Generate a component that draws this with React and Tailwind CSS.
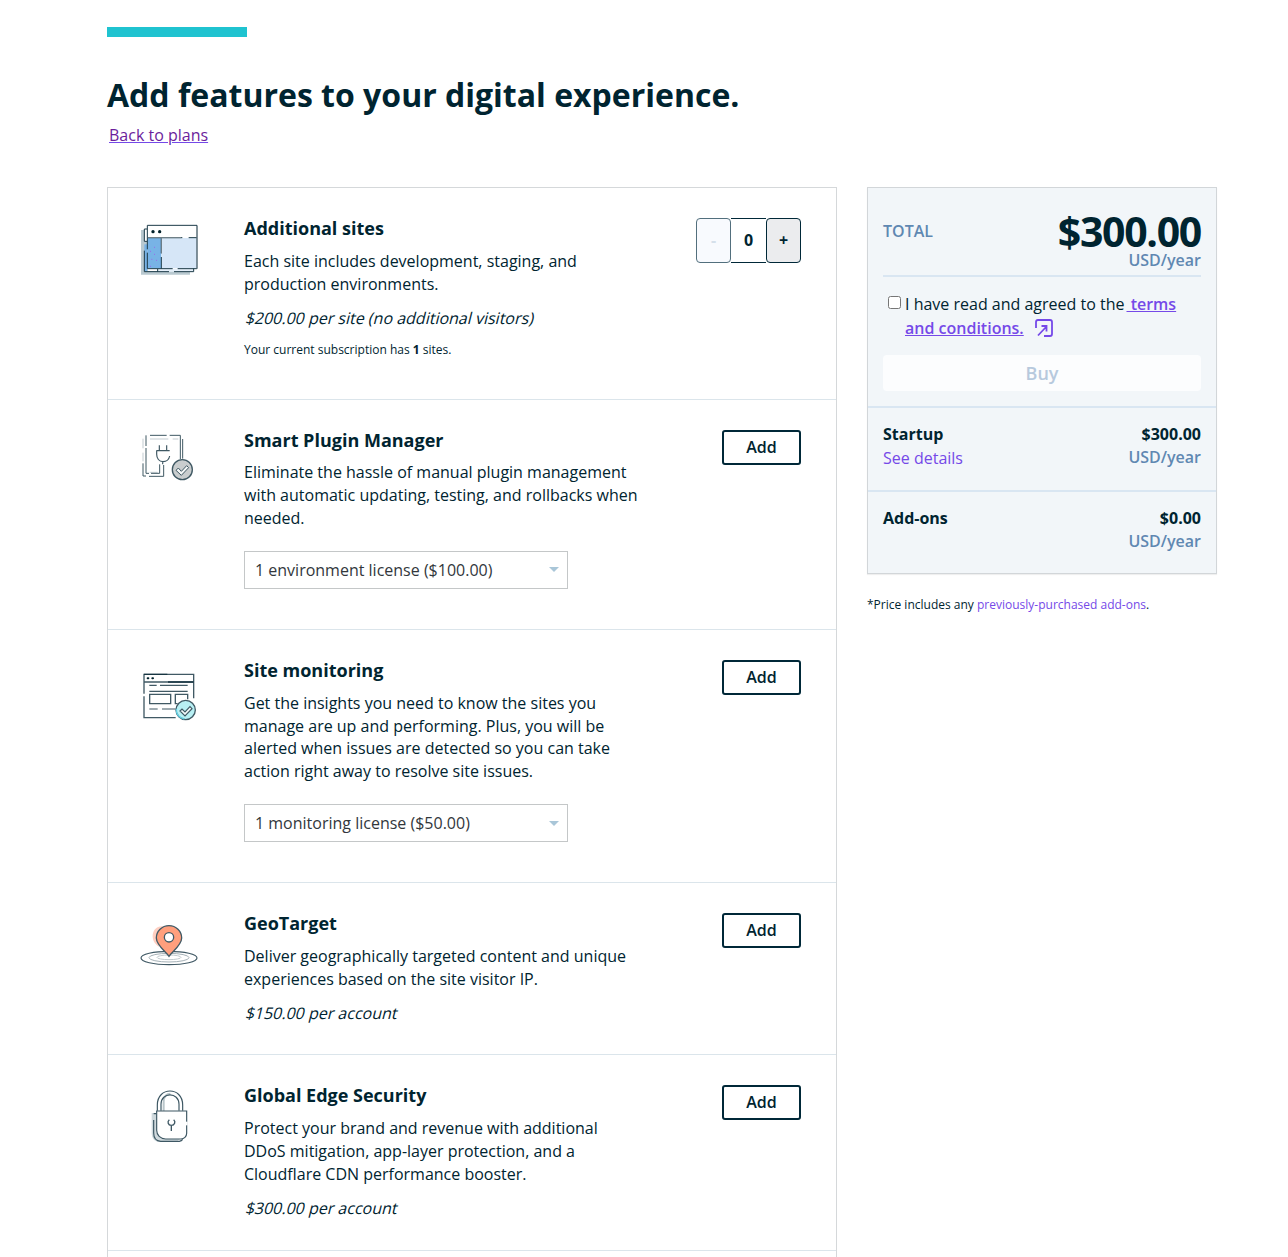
import { useState } from "react";

const SitesIcon = () => (
  <svg className="h-20 w-20" viewBox="0 0 240 240" fill="none" stroke="#1b3a47" strokeWidth="3">
    <path d="M33 60h20v123h127v11H33z" fill="#b9c9d0" stroke="none" />
    <path d="M43 57h9v37h-9z" fill="#fff" stroke="none" />
    <path d="M43 103h9v80h-9z" fill="#78b3e6" stroke="none" />
    <path d="M83 177h108v8H83z" fill="#e6f0fa" stroke="none" />
    <path d="M43 94V57h9M43 94h9M43 122v63h74M83 177v8M132 185h59v-10" />
    <path d="M52 83h42v92H52z" fill="#78b3e6" stroke="none" />
    <path d="M94 83h107v92H94z" fill="#d6e6f7" stroke="none" />
    <path d="M52 46h149v37H52z" fill="#fff" stroke="none" />
    <path d="M52 118V46h149v130H143M52 128v48h76M52 83h105M176 83h25M94 83v47M94 141v35" />
    <path d="M201 48v128M53 83h100M94 84v46" stroke="#78868f" />
    <circle cx="69" cy="65" r="5" fill="#00212b" stroke="none" />
    <circle cx="89" cy="65" r="5" fill="#00212b" stroke="none" />
    <path d="M72 112h3M60 124h3M72 133h3M64 148h3M78 151h3M60 169h3" stroke="#9b6bea" />
  </svg>
);

const PluginIcon = () => (
  <svg className="h-20 w-20" viewBox="0 6 240 240" fill="none" stroke="#3f5863" strokeWidth="3">
    <path d="M39 56v29M39 98v26M60 57h55M128 57h17M59 157h24" stroke="#c3ccd1" />
    <path d="M39 130v38h9M57 169h44v-34M60 46h50M119 46h32v71M48 46v32M48 84v76h9M63 160h26v-27" />
    <path d="M158 57v59" />
    <path d="M88 76v16M110 76v16M79 92h40M80 92v11c0 12 7 22 19 22 10 0 18-7 20-17M98 125v8" strokeWidth="3.5" />
    <circle cx="157" cy="149" r="30" fill="#c9cdce" strokeWidth="4" />
    <path d="M138 151l7-7 9 10 16-17 6 6-22 23z" fill="#f4f6f6" strokeWidth="3" />
  </svg>
);

const MonitoringIcon = () => (
  <svg className="h-20 w-20" viewBox="0 -24 240 240" fill="none" stroke="#405964" strokeWidth="4">
    <path d="M42 101V43h149v72M42 109v64h95M42 66h149" />
    <path d="M42 43h70M114 66h77" stroke="#173541" />
    <path d="M58 76h22M90 76h83M58 94h115M58 147h25M96 147h41" strokeWidth="3.5" />
    <path d="M59 103h63v28H59zM173 118v-15h-37v28h7" />
    <path d="M53 55h2M67 55h2" stroke="#00212b" strokeWidth="6" strokeLinecap="round" />
    <circle cx="167" cy="150" r="29" fill="#b8f0f4" />
    <path d="M139 146c-1 16 9 27 24 31" stroke="#62cde0" />
    <path d="M150 153l6-6 9 9 15-16 6 6-21 22z" fill="#f4fcfd" strokeWidth="3.5" />
  </svg>
);

const GeoIcon = () => (
  <svg className="h-20 w-20" viewBox="0 -16 240 240" fill="none" stroke="#405965" strokeWidth="4">
    <ellipse cx="117" cy="143" rx="84" ry="20" strokeWidth="3.5" />
    <ellipse cx="117" cy="142" rx="60" ry="13" stroke="#a4b0b6" strokeWidth="3" />
    <ellipse cx="117" cy="141" rx="36" ry="7" stroke="#c2cbcf" strokeWidth="3" />
    <path d="M101 48c-20-3-34 12-33 31 1 17 12 25 18 30z" fill="#ffcfc1" stroke="none" />
    <path d="M117 138c-11-15-38-34-38-55a38 37 0 0 1 76 0c0 21-27 40-38 55z" fill="#ff9f7d" />
    <circle cx="117" cy="81" r="14" fill="#fff" />
  </svg>
);

const SecurityIcon = () => (
  <svg className="h-20 w-20" viewBox="0 -9 240 240" fill="none" stroke="#3d5763" strokeWidth="3.5">
    <path d="M65 99h15v61l14 17h56l-10 9H89c-15 0-24-12-24-27z" fill="#cfd9dd" stroke="none" />
    <path d="M71 120v39c0 14 8 24 21 25h56c5-1 8-3 10-6M71 101h8" />
    <path d="M101 93V64c0-14 9-23 20-23" stroke="#bac6ca" strokeWidth="6" />
    <path d="M80 93h90v67c0 10-8 17-17 17h-46c-16 0-27-12-27-26z" fill="#fff" />
    <path d="M170 125v11" stroke="#fff" strokeWidth="6" />
    <path d="M82 92V75c0-56 76-56 76 0v17M93 92V73c0-38 54-38 54 0v19" />
    <path d="M118 119c-7 6-4 17 6 17s14-11 7-17M124 136v17" strokeWidth="4" />
  </svg>
);

const addOns = [
  {
    title: "Smart Plugin Manager",
    icon: PluginIcon,
    height: "h-[230px]",
    gap: "mt-[9px]",
    lines: ["Eliminate the hassle of manual plugin management", "with automatic updating, testing, and rollbacks when", "needed."],
    license: "1 environment license ($100.00)",
  },
  {
    title: "Site monitoring",
    icon: MonitoringIcon,
    height: "h-[253px]",
    gap: "mt-[9.72px]",
    lines: [
      "Get the insights you need to know the sites you",
      "manage are up and performing. Plus, you will be",
      "alerted when issues are detected so you can take",
      "action right away to resolve site issues.",
    ],
    license: "1 monitoring license ($50.00)",
  },
  {
    title: "GeoTarget",
    icon: GeoIcon,
    height: "h-[172px]",
    gap: "mt-[10px]",
    lines: ["Deliver geographically targeted content and unique", "experiences based on the site visitor IP."],
    price: "$150.00 per account",
  },
  {
    title: "Global Edge Security",
    icon: SecurityIcon,
    height: "h-[196px]",
    gap: "mt-[10px]",
    lines: ["Protect your brand and revenue with additional", "DDoS mitigation, app-layer protection, and a", "Cloudflare CDN performance booster."],
    price: "$300.00 per account",
  },
];

const FeatureRow = ({ title, icon: Icon, height, gap, lines, price, license, note, action }) => (
  <div className={`flex border-b border-[#dbe5eb] ${height}`}>
    <div className="w-[136px] shrink-0 pt-[22px] pl-[22px]">
      <Icon />
    </div>
    <div className="flex-1 pt-[29px]">
      <h2 className="text-[18px] leading-[23px] font-bold">{title}</h2>
      <p className={`text-base leading-[22.86px] whitespace-nowrap ${gap}`}>
        {lines.map((line) => (
          <span key={line} className="block">{line}</span>
        ))}
      </p>
      {price && <p className="mt-[11px] ml-[1.5px] w-fit -skew-x-[14deg] text-base leading-[23px]">{price}</p>}
      {note}
      {license && (
        <button className="mt-[21px] flex h-[38px] w-[324px] items-center justify-between border border-[#c4c7c8] pr-2 pl-[10px] text-base text-[#32373c]">
          {license}
          <svg className="h-[5px] w-[10px]" viewBox="0 0 10 5" fill="#a9c6d8">
            <path d="M0 0h10L5 5z" />
          </svg>
        </button>
      )}
    </div>
    <div className="pt-[30px] pr-[35px]">{action}</div>
  </div>
);

const AddButton = () => (
  <button className="h-[35px] w-[79px] rounded-[3px] border-2 border-[#002838] pb-0.5 text-base font-semibold">Add</button>
);

const SiteCounter = ({ count, onChange }) => (
  <div className="flex h-[45px] w-[105px] text-base font-bold">
    <button
      className="w-[35px] rounded-[4px] border border-[#002838] bg-[#f8fafe] pb-px text-[#d5e0eb] disabled:border-[#526f7d]"
      disabled={count === 0}
      onClick={() => onChange(count - 1)}
    >
      -
    </button>
    <span className="flex w-[35px] items-center justify-center border-y border-[#002838] pb-0.5">{count}</span>
    <button className="w-[35px] rounded-[4px] border border-[#002838] bg-[#ebecee] pb-0.5" onClick={() => onChange(count + 1)}>
      +
    </button>
  </div>
);

const PriceLine = ({ label, amount, children }) => (
  <div className="flex h-[84px] justify-between border-t-2 border-[#d9e6f2] px-[15px] pt-[15px] leading-[23px]">
    <div>
      <p className="font-bold">{label}</p>
      {children}
    </div>
    <div className="text-right">
      <p className="font-bold">{amount}</p>
      <p className="font-semibold text-[#5f88b2]">USD/year</p>
    </div>
  </div>
);

const Summary = () => {
  const [agreed, setAgreed] = useState(false);

  return (
    <aside className="w-[350px]">
      <div className="h-[387px] border border-[#d2d6d9] bg-[#f2f6f9] text-base shadow-[0_1px_1px_#00000010]">
        <div className="h-[218px] px-[15px] pt-[15px]">
          <div className="flex h-[74px] justify-between border-b-2 border-[#d9e6f2]">
            <span className="pt-[17px] leading-[23px] font-semibold text-[#5f88b2]">TOTAL</span>
            <div className="text-right">
              <p className="h-[46px] pt-[8px] text-[41px] leading-[40px] font-bold tracking-[-1.3px]">$300.00</p>
              <p className="leading-[23px] font-semibold text-[#5f88b2]">USD/year</p>
            </div>
          </div>
          <div className="mt-[15px] flex">
            <input
              type="checkbox"
              className="mt-[4px] mr-[4px] ml-[5px] h-[13px] w-[13px]"
              checked={agreed}
              onChange={(e) => setAgreed(e.target.checked)}
            />
            <p className="leading-6 whitespace-nowrap">
              I have read and agreed to the
              <a href="#" className="ml-0.5 font-semibold text-[#7549e8] underline">&nbsp;terms</a>
              <br />
              <a href="#" className="font-semibold text-[#7549e8] underline">and conditions.</a>
              <svg className="ml-[11px] inline h-[18px] w-[18px] align-[-3px]" viewBox="0 0 18 18" fill="none" stroke="#7549e8" strokeWidth="1.8">
                <path d="M1 9V3q0-2 2-2h12q2 0 2 2v12q0 2-2 2H9M3 16.5L11.5 7.5M6.5 7h5v5.5" />
              </svg>
            </p>
          </div>
          <button
            className="mt-[15px] h-[36px] w-full rounded-[4px] bg-[#7549e8] text-lg font-semibold text-white disabled:bg-[#fcfdfe] disabled:text-[#b7c9dd]"
            disabled={!agreed}
          >
            Buy
          </button>
        </div>
        <PriceLine label="Startup" amount="$300.00">
          <a href="#" className="block leading-[25px] text-[#7549e8]">See details</a>
        </PriceLine>
        <PriceLine label="Add-ons" amount="$0.00" />
      </div>
      <p className="mt-[22px] text-xs leading-[18px]">
        *Price includes any <a href="#" className="text-[#7549e8]">previously-purchased add-ons</a>.
      </p>
    </aside>
  );
};

const App = () => {
  const [sites, setSites] = useState(0);

  return (
    <main className="h-[1257px] overflow-hidden bg-white pt-[27px] pl-[107px] font-['Open_Sans',sans-serif] text-[#002430]">
      <div className="h-[10px] w-[140px] bg-[#1fc3d0]" />
      <h1 className="mt-[35px] text-[32px] leading-[46px] font-bold whitespace-nowrap">Add features to your digital experience.</h1>
      <a href="#" className="mt-[5px] ml-[2px] block w-fit text-base leading-6 text-[#6b1d9c] underline decoration-[#7549e8]">
        Back to plans
      </a>
      <div className="mt-[40px] flex items-start gap-[30px]">
        <section className="w-[730px] border border-[#d5d8da]">
          <FeatureRow
            title="Additional sites"
            icon={SitesIcon}
            height="h-[212px]"
            gap="mt-[10px]"
            lines={["Each site includes development, staging, and", "production environments."]}
            price="$200.00 per site (no additional visitors)"
            note={
              <p className="mt-[11px] text-[12px] leading-[18px]">
                Your current subscription has <b>1</b> sites.
              </p>
            }
            action={<SiteCounter count={sites} onChange={setSites} />}
          />
          {addOns.map((addOn) => (
            <FeatureRow key={addOn.title} {...addOn} action={<AddButton />} />
          ))}
          <div className="h-10" />
        </section>
        <Summary />
      </div>
    </main>
  );
};

export default App;
